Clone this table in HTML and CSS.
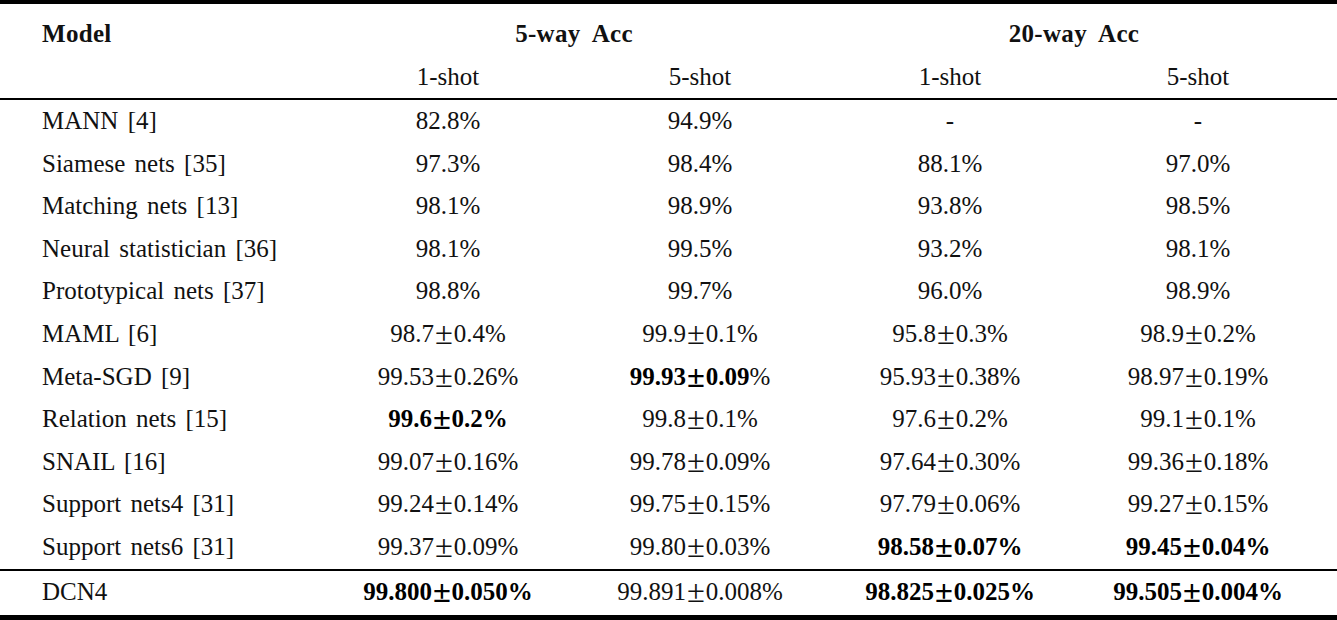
FILE: index.html
```html
<!DOCTYPE html>
<html>
<head>
<meta charset="utf-8">
<link rel="stylesheet" href="styles.css">
</head>
<body>
<table class="results">
  <colgroup>
    <col class="c-model"><col class="c-a"><col class="c-b"><col class="c-c"><col class="c-d">
  </colgroup>
  <thead>
    <tr class="h1">
      <th class="model">Model</th>
      <th colspan="2">5-way Acc</th>
      <th colspan="2">20-way Acc</th>
    </tr>
    <tr class="h2">
      <td></td>
      <td>1-shot</td><td>5-shot</td><td>1-shot</td><td>5-shot</td>
    </tr>
  </thead>
  <tbody>
    <tr><td class="model">MANN [4]</td><td>82.8%</td><td>94.9%</td><td>-</td><td>-</td></tr>
    <tr><td class="model">Siamese nets [35]</td><td>97.3%</td><td>98.4%</td><td>88.1%</td><td>97.0%</td></tr>
    <tr><td class="model">Matching nets [13]</td><td>98.1%</td><td>98.9%</td><td>93.8%</td><td>98.5%</td></tr>
    <tr><td class="model">Neural statistician [36]</td><td>98.1%</td><td>99.5%</td><td>93.2%</td><td>98.1%</td></tr>
    <tr><td class="model">Prototypical nets [37]</td><td>98.8%</td><td>99.7%</td><td>96.0%</td><td>98.9%</td></tr>
    <tr><td class="model">MAML [6]</td><td>98.7<span class="pm">±</span>0.4%</td><td>99.9<span class="pm">±</span>0.1%</td><td>95.8<span class="pm">±</span>0.3%</td><td>98.9<span class="pm">±</span>0.2%</td></tr>
    <tr><td class="model">Meta-SGD [9]</td><td>99.53<span class="pm">±</span>0.26%</td><td><b>99.93<span class="pm">±</span>0.09</b>%</td><td>95.93<span class="pm">±</span>0.38%</td><td>98.97<span class="pm">±</span>0.19%</td></tr>
    <tr><td class="model">Relation nets [15]</td><td><b>99.6<span class="pm">±</span>0.2%</b></td><td>99.8<span class="pm">±</span>0.1%</td><td>97.6<span class="pm">±</span>0.2%</td><td>99.1<span class="pm">±</span>0.1%</td></tr>
    <tr><td class="model">SNAIL [16]</td><td>99.07<span class="pm">±</span>0.16%</td><td>99.78<span class="pm">±</span>0.09%</td><td>97.64<span class="pm">±</span>0.30%</td><td>99.36<span class="pm">±</span>0.18%</td></tr>
    <tr><td class="model">Support nets4 [31]</td><td>99.24<span class="pm">±</span>0.14%</td><td>99.75<span class="pm">±</span>0.15%</td><td>97.79<span class="pm">±</span>0.06%</td><td>99.27<span class="pm">±</span>0.15%</td></tr>
    <tr><td class="model">Support nets6 [31]</td><td>99.37<span class="pm">±</span>0.09%</td><td>99.80<span class="pm">±</span>0.03%</td><td><b>98.58<span class="pm">±</span>0.07%</b></td><td><b>99.45<span class="pm">±</span>0.04%</b></td></tr>
  </tbody>
  <tbody class="ours">
    <tr><td class="model">DCN4</td><td><b>99.800<span class="pm">±</span>0.050%</b></td><td>99.891<span class="pm">±</span>0.008%</td><td><b>98.825<span class="pm">±</span>0.025%</b></td><td><b>99.505<span class="pm">±</span>0.004%</b></td></tr>
  </tbody>
</table>
</body>
</html>
```

FILE: styles.css
```css
html, body {
  margin: 0;
  padding: 0;
  background: #ffffff;
}

body {
  font-family: "Liberation Serif", "Times New Roman", serif;
  font-size: 25px;
  color: #111111;
}

.results {
  width: 1337px;
  border-collapse: separate;
  border-spacing: 0;
  table-layout: fixed;
  border-top: 4px solid #000;
  border-bottom: 5px solid #000;
}

.c-model { width: 322px; }
.c-a { width: 252px; }
.c-b { width: 252px; }
.c-c { width: 248px; }
.c-d { width: 263px; }

.results td,
.results th {
  padding: 0;
  text-align: center;
  white-space: nowrap;
  line-height: 42.6px;
}

.results td:last-child,
.results th:last-child {
  padding-right: 15px;
}

.results .model {
  text-align: left;
  padding-left: 42px;
  word-spacing: 3px;
}

.results th {
  font-weight: bold;
  font-size: 25px;
  word-spacing: 6px;
  letter-spacing: 0.3px;
}

.h1 th {
  line-height: 44px;
  padding-top: 8px;
}

.h2 td {
  line-height: 42px;
  border-bottom: 2px solid #000;
}

.ours td {
  border-top: 2px solid #000;
  line-height: 42px;
  padding-bottom: 2px;
}

.pm {
  display: inline-block;
  transform: scale(1.3, 1.25);
  margin: 0 3px;
}

b {
  font-weight: bold;
  color: #000;
}
```
